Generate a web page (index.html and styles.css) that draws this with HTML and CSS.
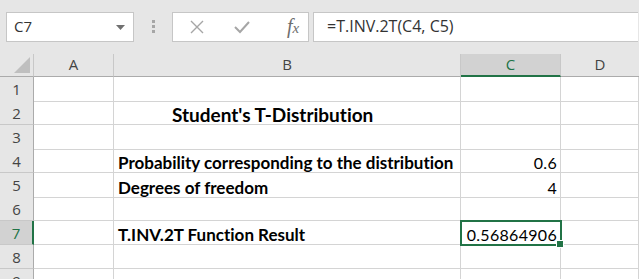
FILE: index.html
```html
<!DOCTYPE html>
<html>
<head>
<meta charset="utf-8">
<link rel="stylesheet" href="styles.css">
</head>
<body>
<div class="app">
  <div class="toolbar">
    <div class="namebox">
      <span class="name">C7</span>
      <svg class="caret" width="9" height="5" viewBox="0 0 9 5"><path d="M0 0H9L4.5 5Z" fill="#707070"/></svg>
    </div>
    <div class="grip"><span></span><span></span><span></span></div>
    <div class="fbuttons">
      <svg class="fbtn" width="14" height="14" viewBox="0 0 14 14"><path d="M1 1L13 13M13 1L1 13" stroke="#a6a6a6" stroke-width="1.4" fill="none"/></svg>
      <svg class="fbtn" width="16" height="14" viewBox="0 0 16 14"><path d="M1 7L6 12L15 2" stroke="#a6a6a6" stroke-width="2" fill="none"/></svg>
      <span class="fx"><i>f</i><i class="x">x</i></span>
    </div>
    <div class="formula">=T.INV.2T(C4, C5)</div>
  </div>
  <div class="sheet">
    <div class="corner"><svg width="16" height="16" viewBox="0 0 16 16"><path d="M16 0V16H0Z" fill="#bfbfbf"/></svg></div>
    <div class="colhead">A</div>
    <div class="colhead">B</div>
    <div class="colhead active">C</div>
    <div class="colhead last">D</div>

    <div class="rowhead r25">1</div><div class="cell r25"></div><div class="cell r25"></div><div class="cell r25"></div><div class="cell r25"></div>
    <div class="rowhead">2</div><div class="cell"></div><div class="cell title">Student's T-Distribution</div><div class="cell"></div><div class="cell"></div>
    <div class="rowhead r25">3</div><div class="cell r25"></div><div class="cell r25"></div><div class="cell r25"></div><div class="cell r25"></div>
    <div class="rowhead">4</div><div class="cell"></div><div class="cell label">Probability corresponding to the distribution</div><div class="cell num">0.6</div><div class="cell"></div>
    <div class="rowhead r25">5</div><div class="cell r25"></div><div class="cell r25 label">Degrees of freedom</div><div class="cell r25 num">4</div><div class="cell r25"></div>
    <div class="rowhead">6</div><div class="cell"></div><div class="cell"></div><div class="cell"></div><div class="cell"></div>
    <div class="rowhead active">7</div><div class="cell"></div><div class="cell label">T.INV.2T Function Result</div><div class="cell num selected">0.56864906<span class="handle"></span></div><div class="cell"></div>
    <div class="rowhead">8</div><div class="cell"></div><div class="cell"></div><div class="cell"></div><div class="cell"></div>
    <div class="rowhead">9</div><div class="cell"></div><div class="cell"></div><div class="cell"></div><div class="cell"></div>
  </div>
</div>
</body>
</html>
```

FILE: styles.css
```css
html, body {
  margin: 0;
  padding: 0;
  background: #e6e6e6;
  overflow: hidden;
}
.app {
  width: 639px;
  height: 279px;
  overflow: hidden;
}
.toolbar {
  height: 54px;
  display: flex;
  align-items: flex-start;
  padding-top: 12px;
  box-sizing: border-box;
  background: #e6e6e6;
}
.namebox {
  margin-left: 6px;
  width: 128px;
  height: 30px;
  box-sizing: border-box;
  background: #fff;
  border: 1px solid #c6c6c6;
  display: flex;
  align-items: center;
  justify-content: space-between;
  padding: 0 8px 0 7px;
  font-family: "Open Sans", sans-serif;
  font-size: 15px;
  color: #333;
}
.name { position: relative; top: -1px; }
.caret { margin-top: 1px; }
.grip {
  width: 38px;
  display: flex;
  flex-direction: column;
  align-items: center;
  gap: 2px;
  padding-top: 8px;
}
.grip span {
  width: 3px;
  height: 3px;
  background: #a6a6a6;
}
.fbuttons {
  width: 137px;
  height: 30px;
  box-sizing: border-box;
  background: #fff;
  border: 1px solid #c6c6c6;
  display: flex;
  align-items: center;
  padding-left: 17px;
}
.fbtn:nth-child(2) { margin-left: 30px; }
.fx {
  margin-left: 37px;
  font-family: "Liberation Serif", serif;
  font-size: 20px;
  color: #6e6e6e;
  position: relative;
  top: -1px;
}
.fx i.x { font-size: 15px; }
.formula {
  margin-left: 4px;
  flex: 1;
  margin-right: 1px;
  height: 30px;
  box-sizing: border-box;
  background: #fff;
  border: 1px solid #c6c6c6;
  border-right: none;
  padding-left: 13px;
  line-height: 27px;
  font-family: "Open Sans", sans-serif;
  font-size: 16px;
  color: #333;
}
.sheet {
  display: grid;
  grid-template-columns: 34px 80px 347px 100px 1fr;
  grid-auto-rows: 24px;
  grid-template-rows: 23px;
  background: #fff;
}
.corner, .colhead {
  background: #e6e6e6;
  border-right: 1px solid #c8c8c8;
  border-bottom: 1px solid #ababab;
  box-sizing: border-box;
}
.corner {
  display: flex;
  align-items: flex-end;
  justify-content: flex-end;
  padding: 0 3px 3px 0;
}
.colhead {
  font-family: "Open Sans", sans-serif;
  font-size: 15px;
  color: #444;
  text-align: center;
  line-height: 21px;
}
.colhead.last { border-right: none; }
.colhead.active {
  background: #d2d2d2;
  color: #217346;
  border-bottom: 2px solid #217346;
}
.rowhead {
  background: #e6e6e6;
  border-right: 1px solid #ababab;
  border-bottom: 1px solid #c8c8c8;
  box-sizing: border-box;
  font-family: "Open Sans", sans-serif;
  font-size: 15px;
  color: #444;
  text-align: center;
  line-height: 24px;
}
.rowhead.active {
  background: #d2d2d2;
  color: #217346;
  border-right: 2px solid #217346;
}
.r25 { height: 25px; }
.rowhead.r25 { line-height: 25px; }
.cell {
  border-right: 1px solid #d4d4d4;
  border-bottom: 1px solid #d4d4d4;
  box-sizing: border-box;
  font-family: "Lato", sans-serif;
  font-size: 17px;
  font-variant-ligatures: none;
  color: #000;
  padding-top: 5px;
  line-height: 18px;
  white-space: nowrap;
  position: relative;
}
.cell.r25 { padding-top: 6px; }
.label {
  font-weight: bold;
  padding-left: 4px;
}
.title {
  font-weight: bold;
  font-size: 19px;
  padding-left: 58px;
}
.num {
  text-align: right;
  padding-right: 3px;
  font-size: 16px;
  letter-spacing: 0.3px;
}
.selected {
  outline: 2px solid #217346;
  outline-offset: -1px;
  z-index: 2;
}
.handle {
  position: absolute;
  right: -4px;
  bottom: -4px;
  width: 6px;
  height: 6px;
  background: #217346;
  border: 1px solid #fff;
}
```
